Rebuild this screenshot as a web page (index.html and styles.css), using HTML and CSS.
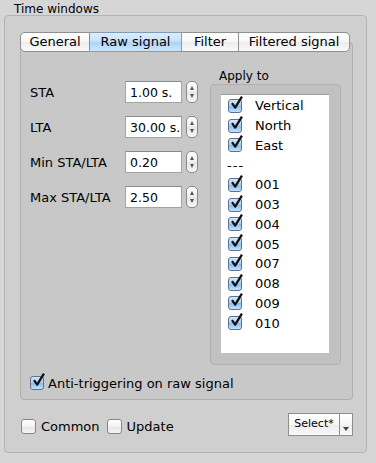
FILE: index.html
```html
<!DOCTYPE html>
<html lang="en">
<head>
    <meta charset="UTF-8">
    <meta name="viewport" content="width=device-width, initial-scale=1.0">
    <title>Time windows</title>
    <link rel="stylesheet" href="styles.css">
</head>
<body>
    <svg class="defs" width="0" height="0">
        <symbol id="tick" viewBox="0 0 16 16">
            <path d="M3.2 7.6 L6.6 12.4 L13.8 0.6" fill="none" stroke="#111" stroke-width="2.4" stroke-linejoin="round"/>
        </symbol>
    </svg>
    <div class="window">
        <div class="group-title">Time windows</div>
        <div class="group">
            <div class="tabs">
                <div class="tab tab-general">General</div>
                <div class="tab tab-raw active">Raw signal</div>
                <div class="tab tab-filter">Filter</div>
                <div class="tab tab-filtered">Filtered signal</div>
            </div>
            <div class="pane">
                <div class="pane-top">
                    <div class="form">
                        <div class="row">
                            <span class="label">STA</span>
                            <span class="input">1.00 s.</span>
                            <span class="stepper"><i class="up"></i><i class="down"></i></span>
                        </div>
                        <div class="row">
                            <span class="label">LTA</span>
                            <span class="input">30.00 s.</span>
                            <span class="stepper"><i class="up"></i><i class="down"></i></span>
                        </div>
                        <div class="row">
                            <span class="label">Min STA/LTA</span>
                            <span class="input">0.20</span>
                            <span class="stepper"><i class="up"></i><i class="down"></i></span>
                        </div>
                        <div class="row">
                            <span class="label">Max STA/LTA</span>
                            <span class="input">2.50</span>
                            <span class="stepper"><i class="up"></i><i class="down"></i></span>
                        </div>
                    </div>
                    <div class="apply">
                        <div class="apply-title">Apply to</div>
                        <div class="apply-box">
                            <ul class="list">
                                <li><span class="check on"><svg><use href="#tick"/></svg></span>Vertical</li>
                                <li><span class="check on"><svg><use href="#tick"/></svg></span>North</li>
                                <li><span class="check on"><svg><use href="#tick"/></svg></span>East</li>
                                <li class="sep">---</li>
                                <li><span class="check on"><svg><use href="#tick"/></svg></span>001</li>
                                <li><span class="check on"><svg><use href="#tick"/></svg></span>003</li>
                                <li><span class="check on"><svg><use href="#tick"/></svg></span>004</li>
                                <li><span class="check on"><svg><use href="#tick"/></svg></span>005</li>
                                <li><span class="check on"><svg><use href="#tick"/></svg></span>007</li>
                                <li><span class="check on"><svg><use href="#tick"/></svg></span>008</li>
                                <li><span class="check on"><svg><use href="#tick"/></svg></span>009</li>
                                <li><span class="check on"><svg><use href="#tick"/></svg></span>010</li>
                            </ul>
                        </div>
                    </div>
                </div>
                <label class="anti"><span class="check on"><svg><use href="#tick"/></svg></span>Anti-triggering on raw signal</label>
            </div>
            <div class="bottom">
                <label class="opt"><span class="check"></span>Common</label>
                <label class="opt"><span class="check"></span>Update</label>
                <div class="select">
                    <span class="select-main">Select*</span>
                    <span class="select-arrow"></span>
                </div>
            </div>
        </div>
    </div>
</body>
</html>
```

FILE: styles.css
```css
* {
    box-sizing: border-box;
}
body {
    margin: 0;
    background-color: #d6d6d6;
    font-family: "DejaVu Sans", sans-serif;
    font-size: 13px;
    color: #000;
}
.defs {
    position: absolute;
}
.window {
    width: 376px;
    height: 463px;
}
.group-title {
    height: 15px;
    padding: 3px 0 0 14px;
    font-size: 12px;
    line-height: 12px;
}
.group {
    margin-left: 4px;
    width: 363px;
    height: 438px;
    border: 1px solid #b3b3b3;
    border-radius: 4px;
    background-color: #cfcfcf;
    padding: 16px 13px 0 15px;
}

/* tabs */
.tabs {
    display: flex;
    height: 20px;
    position: relative;
    z-index: 1;
}
.tab {
    height: 20px;
    line-height: 18px;
    text-align: center;
    border: 1px solid #8f8f8f;
    border-left: none;
    background: linear-gradient(#ffffff, #f7f7f7 50%, #ececec 51%, #fafafa);
}
.tab-general {
    width: 70px;
    border-left: 1px solid #8f8f8f;
    border-radius: 5px 0 0 5px;
}
.tab-raw {
    width: 92px;
}
.tab-filter {
    width: 57px;
}
.tab-filtered {
    width: 111px;
    border-radius: 0 5px 5px 0;
}
.tab.active {
    background: linear-gradient(#dcedfd, #c4e0fa 50%, #acd3f7 51%, #cfe6fc);
    border-color: #7f9bb7;
}
.pane {
    margin-top: -10px;
    height: 358px;
    border: 1px solid #adadad;
    border-radius: 4px;
    background-color: #c8c8c8;
    padding: 27px 0 0 9px;
}
.pane-top {
    display: flex;
}

/* form on the left */
.form {
    width: 180px;
    padding-top: 11px;
    display: flex;
    flex-direction: column;
    gap: 13px;
}
.row {
    display: flex;
    align-items: center;
    height: 22px;
}
.label {
    width: 95px;
}
.input {
    width: 57px;
    height: 22px;
    line-height: 21px;
    padding-left: 4px;
    background-color: #fff;
    border: 1px solid #a3a3a3;
    border-top-color: #8a8a8a;
    font-size: 12.5px;
    white-space: nowrap;
}
.stepper {
    width: 12px;
    height: 22px;
    margin-left: 4px;
    border: 1px solid #8a8a8a;
    border-radius: 5px;
    background: linear-gradient(#ffffff, #f0f0f0 50%, #e6e6e6 51%, #f7f7f7);
    display: flex;
    flex-direction: column;
    justify-content: space-between;
    align-items: center;
    padding: 4px 0;
}
.stepper i {
    width: 0;
    height: 0;
    border-left: 2.5px solid transparent;
    border-right: 2.5px solid transparent;
}
.stepper .up {
    border-bottom: 4px solid #555;
}
.stepper .down {
    border-top: 4px solid #555;
}

/* apply to box */
.apply-title {
    padding-left: 9px;
    height: 14px;
    font-size: 12px;
    line-height: 12px;
}
.apply-box {
    width: 131px;
    height: 281px;
    border: 1px solid #b0b0b0;
    border-radius: 4px;
    background-color: #c1c1c1;
    padding: 9px 0 0 10px;
}
.list {
    list-style: none;
    margin: 0;
    padding: 1px 0 0 0;
    width: 108px;
    height: 259px;
    background-color: #fff;
    border-top: 1px solid #9d9d9d;
}
.list li {
    height: 19.75px;
    display: flex;
    align-items: center;
    padding-left: 7px;
}
.list li.sep {
    padding-left: 6px;
    letter-spacing: 1px;
}
.list .check {
    margin-right: 13px;
}

/* checkboxes */
.check {
    position: relative;
    width: 14px;
    height: 14px;
    flex: none;
    border: 1px solid #7d7d7d;
    border-radius: 3px;
    background: linear-gradient(#ffffff, #f2f2f2 50%, #e4e4e4 51%, #f6f6f6);
}
.check.on {
    border-color: #5a7394;
    background: linear-gradient(#d3e8fb, #a7cdf3 50%, #86bbee 51%, #c4e2fd);
}
.check svg {
    position: absolute;
    left: 0;
    top: -4px;
    width: 15px;
    height: 15px;
    overflow: visible;
}
.anti {
    display: flex;
    align-items: center;
    margin-top: 11px;
    height: 14px;
    gap: 4px;
}

/* bottom row */
.bottom {
    display: flex;
    align-items: center;
    margin-top: 13px;
    height: 22px;
}
.opt {
    display: flex;
    align-items: center;
    gap: 5px;
    margin-right: 6px;
    margin-left: 1px;
    padding-top: 4px;
}
.opt .check {
    width: 15px;
    height: 15px;
    border-color: #868686;
}
.select {
    margin-left: auto;
    display: flex;
    height: 23px;
    border: 1px solid #8e8e8e;
    background: linear-gradient(#ffffff, #f6f6f6 50%, #ececec 51%, #fafafa);
}
.select-main {
    width: 51px;
    line-height: 20px;
    text-align: center;
    font-size: 11px;
    border-right: 1px solid #8e8e8e;
}
.select-arrow {
    width: 12px;
    position: relative;
}
.select-arrow::after {
    content: "";
    position: absolute;
    left: 3px;
    top: 13px;
    border-left: 3px solid transparent;
    border-right: 3px solid transparent;
    border-top: 4px solid #444;
}
```
